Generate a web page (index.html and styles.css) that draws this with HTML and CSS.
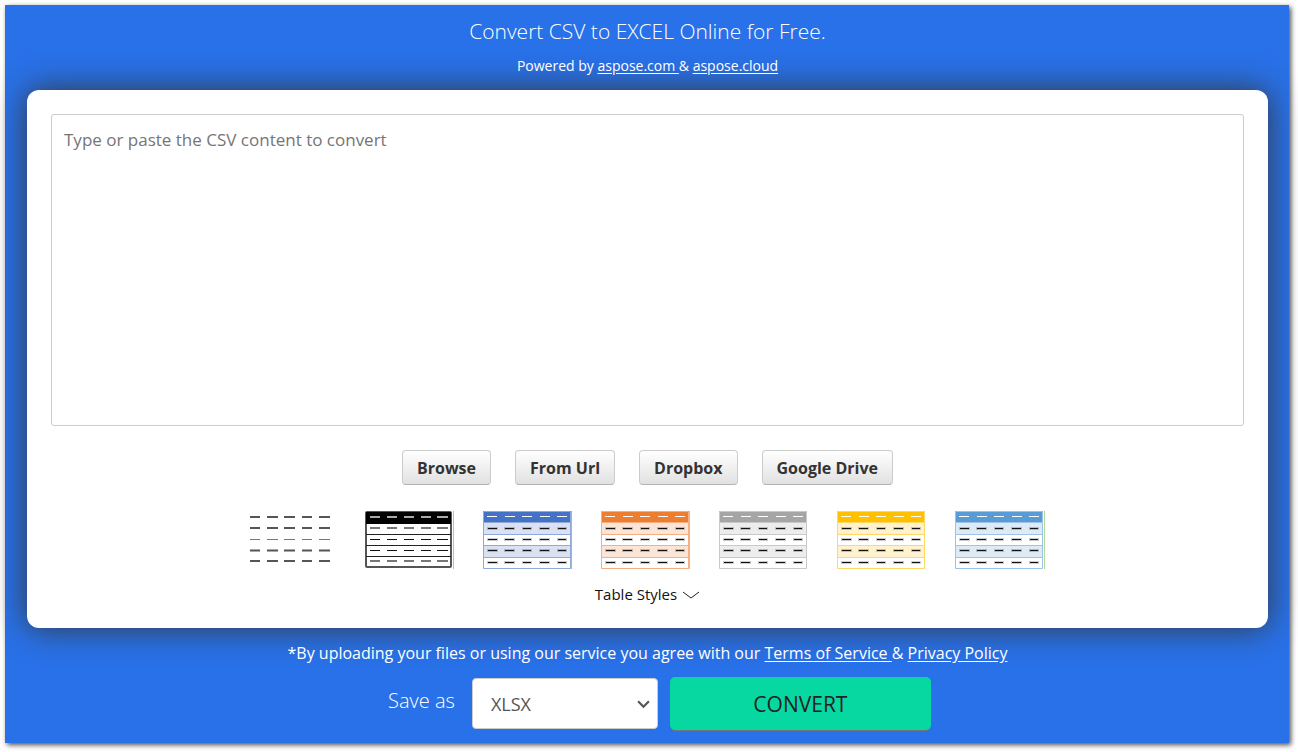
FILE: index.html
```
<!DOCTYPE html>
<html lang="en">
  <head>
    <meta charset="UTF-8" />
    <meta name="viewport" content="width=device-width, initial-scale=1.0" />
    <title>Convert CSV to EXCEL Online for Free</title>
    <link rel="stylesheet" href="styles.css">
  </head>
  <body>
    <!-- shared shapes for the table style thumbnails -->
    <svg class="sprite" aria-hidden="true">
      <symbol id="banded-table" viewBox="0 0 90 58">
        <rect class="band-white" x="0" y="0" width="88" height="58" />
        <rect class="band-head" x="0" y="0" width="88" height="12" />
        <rect class="band-tint" x="0" y="12" width="88" height="11" />
        <rect class="band-tint" x="0" y="35" width="88" height="11" />
        <path class="band-line" d="M0.500 0.500H87.500V57.500H0.500ZM0 11.500H88M0 23.500H88M0 34.500H88M0 46.500H88" />
        <path class="dash-head" d="M4 5.500H14M22 5.500H32M39 5.500H49M57 5.500H67M74 5.500H84" />
        <path class="dash-halo" d="M4 17.500H15M21 17.500H32M39 17.500H49M56 17.500H67M74 17.500H84M4 28.500H15M21 28.500H32M39 28.500H49M56 28.500H67M74 28.500H84M4 39.500H15M21 39.500H32M39 39.500H49M56 39.500H67M74 39.500H84M4 51.500H15M21 51.500H32M39 51.500H49M56 51.500H67M74 51.500H84" />
        <path class="dash" d="M5 17.500H14M22 17.500H31M40 17.500H48M57 17.500H66M75 17.500H83M5 28.500H14M22 28.500H31M40 28.500H48M57 28.500H66M75 28.500H83M5 39.500H14M22 39.500H31M40 39.500H48M57 39.500H66M75 39.500H83M5 51.500H14M22 51.500H31M40 51.500H48M57 51.500H66M75 51.500H83" />
      </symbol>
    </svg>

    <main class="converter">
      <header class="header">
        <h1>Convert CSV to EXCEL Online for Free.</h1>
        <p>Powered by <a href="#">aspose.com </a>&amp; <a href="#">aspose.cloud</a></p>
      </header>

      <section class="card">
        <textarea class="content" aria-label="CSV content" placeholder="Type or paste the CSV content to convert"></textarea>

        <div class="sources">
          <button type="button">Browse</button>
          <button type="button">From Url</button>
          <button type="button">Dropbox</button>
          <button type="button">Google Drive</button>
        </div>

        <div class="table-styles">
          <button type="button" aria-label="Plain">
            <svg viewBox="0 0 90 58">
              <path class="dash-soft" d="M3 6H13M20 6H31M37 6H48M55 6H65M72 6H83M3 17H13M20 17H31M37 17H48M55 17H65M72 17H83M3 39.500H13M20 39.500H31M37 39.500H48M55 39.500H65M72 39.500H83M3 50H13M20 50H31M37 50H48M55 50H65M72 50H83" />
              <path class="dash-thin" d="M3 28.500H13M20 28.500H31M37 28.500H48M55 28.500H65M72 28.500H83" />
            </svg>
          </button>
          <button type="button" aria-label="Black">
            <svg viewBox="0 0 90 58">
              <rect class="black-frame" x="1" y="1" width="85" height="55" rx="1" />
              <rect x="1" y="1" width="85" height="12" />
              <path class="black-line" d="M1 23.500H86M1 34.500H86M1 45.500H86" />
              <path class="dash-light" d="M5 6H15M22 6H32M39 6H49M56 6H66M72 6H83" />
              <path class="dash-gray" d="M5 17H15M22 17H32M39 17H49M56 17H66M72 17H83M5 50H15M22 50H32M39 50H49M56 50H66M72 50H83" />
              <path class="dash" d="M5 28.500H15M22 28.500H32M39 28.500H49M56 28.500H66M72 28.500H83M5 39.500H15M22 39.500H32M39 39.500H49M56 39.500H66M72 39.500H83" />
              <path class="edge-blue" d="M88.500 0V58" />
            </svg>
          </button>
          <button type="button" class="blue" aria-label="Blue">
            <svg viewBox="0 0 90 58"><use href="#banded-table" /><path class="edge-rose" d="M88.500 0V58" /></svg>
          </button>
          <button type="button" class="orange" aria-label="Orange">
            <svg viewBox="0 0 90 58"><use href="#banded-table" /><path class="edge-tan" d="M88.500 0V58" /></svg>
          </button>
          <button type="button" class="gray" aria-label="Gray">
            <svg viewBox="0 0 90 58"><use href="#banded-table" /></svg>
          </button>
          <button type="button" class="gold" aria-label="Gold">
            <svg viewBox="0 0 90 58"><use href="#banded-table" /></svg>
          </button>
          <button type="button" class="sky" aria-label="Light blue">
            <svg viewBox="0 0 90 58"><use href="#banded-table" /><path class="edge-green" d="M89.500 0V58" /></svg>
          </button>
        </div>

        <button type="button" class="more-styles">
          Table Styles
          <svg viewBox="0 0 18 8"><path d="M1 1L9 7L17 1" /></svg>
        </button>
      </section>

      <footer class="footer">
        <p>*By uploading your files or using our service you agree with our <a href="#">Terms of Service </a>&amp; <a href="#">Privacy Policy</a></p>
        <form class="save">
          <label for="format">Save as</label>
          <div class="select-wrap">
            <select id="format">
              <option>XLSX</option>
              <option>XLS</option>
              <option>ODS</option>
            </select>
            <svg viewBox="0 0 12 8"><path d="M1 1L6 6L11 1" /></svg>
          </div>
          <button type="button" class="convert">CONVERT</button>
        </form>
      </footer>
    </main>
  </body>
</html>
```
FILE: styles.css
```
* {
  margin: 0;
  padding: 0;
  box-sizing: border-box;
  font-family: "Open Sans", "Noto Sans", sans-serif;
}

body {
  display: flex;
  min-height: 100vh;
  padding: 5px 9px 9px 5px;
  background-color: #fff;
}

.sprite {
  display: none;
}

.converter {
  flex: 1;
  padding: 12px 21px 12px 22px;
  background-color: #2971e8;
  box-shadow: 2px 2px 5px rgba(0, 0, 0, 0.7);
  color: #fff;
}

a {
  color: inherit;
  text-underline-offset: 2px;
}

.header {
  text-align: center;
  margin-bottom: 12px;
}

.header h1 {
  font-size: 21px;
  font-weight: 300;
  line-height: 28px;
  margin-bottom: 8px;
}

.header p {
  font-size: 14px;
  line-height: 25px;
}

.card {
  display: flex;
  flex-direction: column;
  align-items: center;
  padding: 24px 24px 21px;
  background-color: #fff;
  border-radius: 12px;
  box-shadow: 0 0 32px rgba(51, 51, 51, 0.95);
  color: #111;
}

.content {
  width: 100%;
  height: 312px;
  padding: 12px;
  border: 1px solid #ccc;
  border-radius: 3px;
  font-size: 17px;
  line-height: 26px;
  resize: none;
}

.content::placeholder {
  color: #757575;
}

.sources {
  display: flex;
  gap: 24px;
  margin: 24px 0 26px;
}

.sources button {
  height: 35px;
  padding: 0 14px;
  background: linear-gradient(#fff, #e1e1e1);
  border: 1px solid #ccc;
  border-bottom-color: #b3b3b3;
  border-radius: 4px;
  color: #333;
  font-size: 16px;
  font-weight: 700;
}

.table-styles {
  display: flex;
  gap: 28px;
  margin-bottom: 13px;
  padding-right: 4px;
}

.table-styles button {
  background: none;
  border: none;
  cursor: pointer;
}

.table-styles svg {
  display: block;
  width: 90px;
  height: 58px;
}

.blue {
  --head: #4472c4;
  --line: #8eaadb;
  --tint: #d9e1f2;
}

.orange {
  --head: #ed7d31;
  --line: #f4b083;
  --tint: #fce4d6;
}

.gray {
  --head: #a5a5a5;
  --line: #c9c9c9;
  --tint: #ededed;
}

.gold {
  --head: #ffc000;
  --line: #ffd966;
  --tint: #fff2cc;
}

.sky {
  --head: #5b9bd5;
  --line: #9dc3e8;
  --tint: #ddebf7;
}

.band-white {
  fill: #fff;
}

.band-head {
  fill: var(--head);
}

.band-tint {
  fill: var(--tint);
}

.band-line {
  fill: none;
  stroke: var(--line);
}

.dash-head {
  stroke: #fff;
}

.dash-halo {
  stroke: rgba(0, 0, 0, 0.2);
  stroke-width: 3;
}

.dash {
  stroke: #111;
}

.dash-soft {
  stroke: #555;
  stroke-width: 2;
}

.dash-thin {
  stroke: #777;
}

.dash-light {
  stroke: #aaa;
  stroke-width: 2;
}

.dash-gray {
  stroke: #777;
  stroke-width: 2;
}

.black-frame {
  fill: #fff;
  stroke: #555;
  stroke-width: 2;
}

.black-line {
  stroke: #222;
}

.edge-blue {
  stroke: #9dc3f0;
}

.edge-rose {
  stroke: #d0a59a;
}

.edge-tan {
  stroke: #dbb99d;
}

.edge-green {
  stroke: #b5d99c;
}

.more-styles {
  display: flex;
  align-items: center;
  gap: 5px;
  background: none;
  border: none;
  color: #111;
  font-size: 15px;
  line-height: 25px;
}

.more-styles svg {
  width: 18px;
  height: 8px;
  fill: none;
  stroke: #222;
}

.footer {
  padding-top: 12px;
  text-align: center;
}

.footer p {
  font-size: 16px;
  line-height: 26px;
  margin-bottom: 11px;
}

.save {
  display: flex;
  justify-content: center;
  align-items: center;
  gap: 12px;
  padding-left: 24px;
}

.save label {
  margin-right: 5px;
  padding-bottom: 6px;
  font-size: 20px;
  font-weight: 300;
}

.select-wrap {
  position: relative;
}

.select-wrap select {
  width: 186px;
  height: 51px;
  padding: 0 18px;
  appearance: none;
  background-color: #fff;
  border: 1px solid #ccc;
  border-radius: 4px;
  color: #555;
  font-size: 18px;
}

.select-wrap svg {
  position: absolute;
  top: 22px;
  right: 8px;
  width: 13px;
  height: 9px;
  fill: none;
  stroke: #555;
  stroke-width: 2;
  pointer-events: none;
}

.convert {
  width: 261px;
  height: 53px;
  background-color: #07d8a1;
  border: none;
  border-radius: 5px;
  box-shadow: 0 2px 1px -1px #777;
  color: #222;
  cursor: pointer;
  font-size: 21px;
}
```
